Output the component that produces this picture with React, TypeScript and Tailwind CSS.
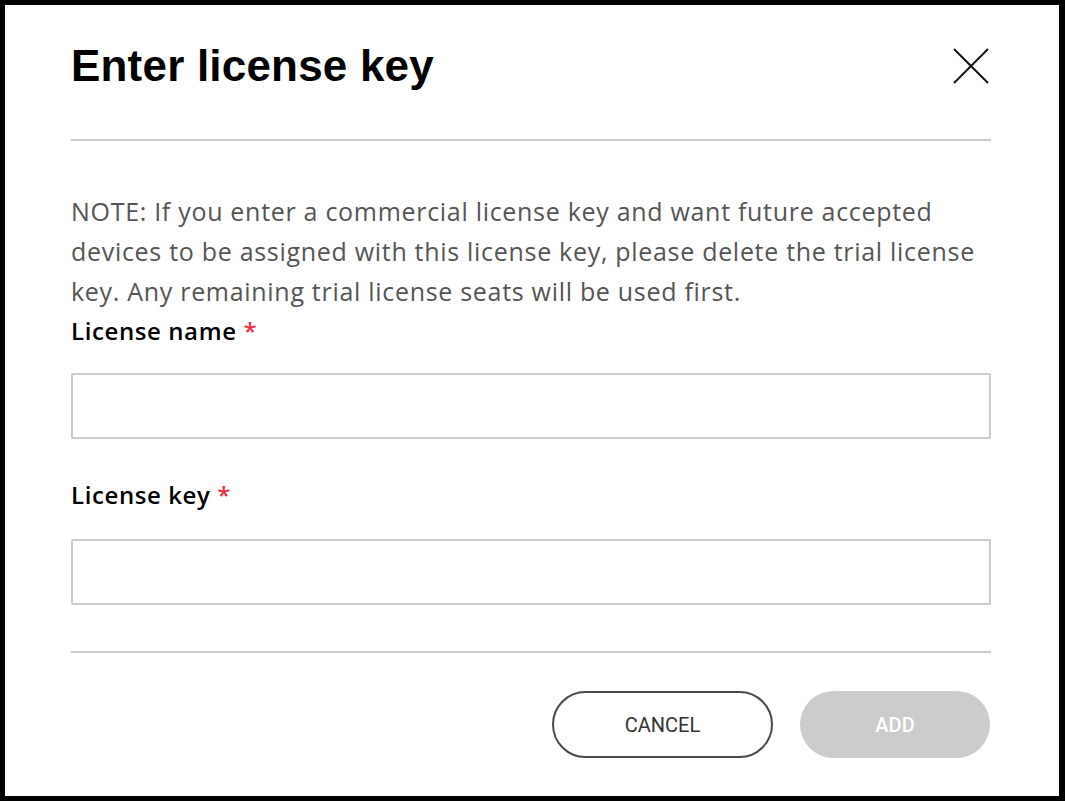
import React from 'react';

const Label: React.FC<{ text: string }> = ({ text }) => (
    <label className="block text-[24px] leading-[40px] font-semibold text-black font-['Open_Sans',sans-serif] tracking-[0.6px]">
        {text} <span className="text-[#f0323c]">*</span>
    </label>
);

const App: React.FC = () => {
    return (
        <div className="w-[1065px] h-[801px] bg-white border-t-[5px] border-l-[5px] border-r-[6px] border-b-[5px] border-black font-['Roboto',sans-serif]">
            <div className="pl-[66px] pr-[68px]">
                {/* Header */}
                <div className="flex items-center justify-between pt-[31px] pb-[43px] border-b-2 border-[#cccccc]">
                    <h1 className="text-[44px] leading-[60px] font-bold text-black font-['Liberation_Sans',sans-serif] tracking-[0.2px]">Enter license key</h1>
                    <button className="w-[38px] h-[38px] mr-[1px]" aria-label="Close">
                        <svg viewBox="0 0 38 38" className="w-[38px] h-[38px]" fill="none" stroke="#111" strokeWidth="2">
                            <path d="M2 2 L36 36 M36 2 L2 36" />
                        </svg>
                    </button>
                </div>

                {/* Body */}
                <div className="pt-[50px] pb-[46px] border-b-2 border-[#cccccc]">
                    <p className="text-[25px] leading-[40px] text-[#555555] font-['Open_Sans',sans-serif] tracking-[0.7px]">
                        NOTE: If you enter a commercial license key and want future accepted devices to be assigned with this license key, please delete the trial license key. Any remaining trial license seats will be used first.
                    </p>
                    <Label text="License name" />
                    <input className="block w-full h-[66px] mt-[22px] border-2 border-[#cccccc] rounded-[2px] px-4 text-[22px] outline-none" />
                    <div className="mt-[36px]">
                        <Label text="License key" />
                    </div>
                    <input className="block w-full h-[66px] mt-[24px] border-2 border-[#cccccc] rounded-[2px] px-4 text-[22px] outline-none" />
                </div>

                {/* Footer */}
                <div className="flex justify-end gap-[27px] pt-[38px] pr-[1px]">
                    <button className="w-[221px] h-[67px] rounded-full border-2 border-[#4a4a4a] text-[20px] font-normal text-[#333333]">
                        CANCEL
                    </button>
                    <button disabled className="w-[190px] h-[67px] rounded-full bg-[#cccccc] text-[20px] font-medium text-white">
                        ADD
                    </button>
                </div>
            </div>
        </div>
    );
};

export default App;
